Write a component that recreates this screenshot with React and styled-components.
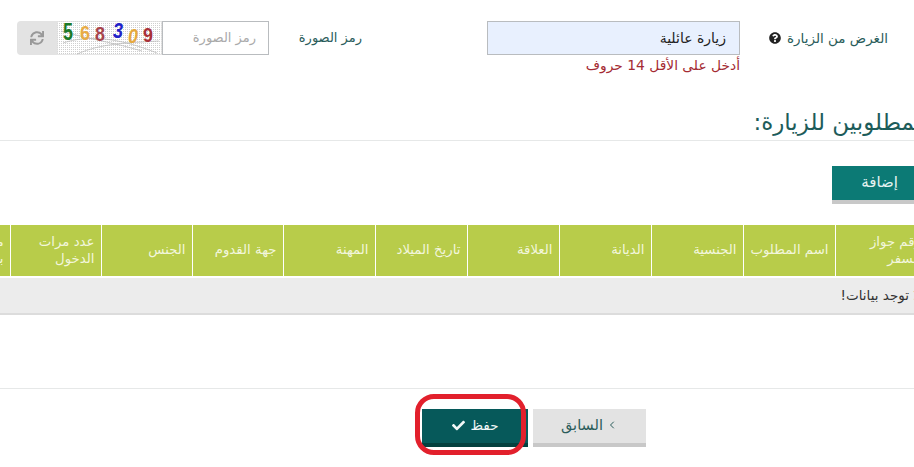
import React from "react";
import styled, { createGlobalStyle } from "styled-components";
import { FaSync, FaCheck, FaQuestionCircle } from "react-icons/fa";
import { ChevronLeft } from "lucide-react";

const GlobalStyle = createGlobalStyle`
  html, body {
    margin: 0;
    padding: 0;
    background: #fff;
  }
  * { box-sizing: border-box; }
`;

const Page = styled.div`
  position: relative;
  width: 914px;
  height: 467px;
  overflow: hidden;
  direction: rtl;
  font-family: "DejaVu Sans", "Noto Sans", sans-serif;
  font-size: 13px;
  color: #2a5c5a;
`;

const FormRow = styled.div`
  display: flex;
  height: 107px;
  padding-top: 21px;
`;

const Label = styled.label`
  flex: 0 0 ${(p) => p.$width}px;
  padding-right: ${(p) => p.$pad}px;
  font-size: ${(p) => p.$size || 13}px;
  line-height: 34px;
  white-space: nowrap;
  svg {
    font-size: 12px;
    color: #222;
    margin-right: 6px;
    vertical-align: -1px;
  }
`;

const Field = styled.div`
  flex: 0 0 253px;
`;

const TextInput = styled.div`
  height: 34px;
  background: ${(p) => (p.$filled ? "#e8f0fe" : "#fff")};
  border: 1px solid #b9bcbf;
  padding-right: ${(p) => (p.$filled ? 13 : 12)}px;
  font-size: ${(p) => (p.$filled ? 14 : 13)}px;
  line-height: 32px;
  color: ${(p) => (p.$filled ? "#222" : "#aaa")};
  width: ${(p) => (p.$width ? `${p.$width}px` : "auto")};
  flex: none;
`;

const ErrorText = styled.div`
  color: #a42a32;
  font-size: 13.8px;
  line-height: 17px;
  margin-top: 2px;
`;

const Captcha = styled.div`
  display: flex;
  align-items: stretch;
`;

const CaptchaImage = styled.svg`
  display: block;
  width: 105px;
  height: 34px;
`;

const RefreshButton = styled.div`
  width: 40px;
  height: 34px;
  background: #e3e3e3;
  border-radius: 4px 0 0 4px;
  display: flex;
  align-items: center;
  justify-content: center;
  color: #999;
  font-size: 14px;
`;

const SectionTitle = styled.h2`
  margin: 0 -110px 0 0;
  height: 33px;
  font-size: 23px;
  font-weight: 400;
  line-height: 30px;
  color: #1d5c5a;
  white-space: nowrap;
`;

const Divider = styled.div`
  height: 1px;
  background: #e6e8e8;
`;

const Toolbar = styled.div`
  display: flex;
  padding-top: 25px;
  margin-right: -20px;
`;

const AddButton = styled.div`
  width: 102px;
  height: 38px;
  background: #0c7a75;
  border-bottom: 4px solid #c8c8c8;
  color: #e6f3f2;
  font-size: 15px;
  padding-right: 36px;
  line-height: 33px;
`;

const TableWrap = styled.div`
  margin: 21px -13px 0 0;
  width: 1008px;
`;

const Table = styled.table`
  width: 1008px;
  table-layout: fixed;
  border-collapse: collapse;
  border-spacing: 0;
`;

const HeadCell = styled.th`
  width: ${(p) => p.$width}px;
  height: 52px;
  background: #b8cc4a;
  color: #f2f6dc;
  font-weight: 400;
  font-size: 13.3px;
  line-height: 17px;
  text-align: right;
  padding: 0 6px 2px;
  border-left: 1px solid #fff;
  border-bottom: 2px solid #fff;
  vertical-align: middle;
`;

const EmptyCell = styled.td`
  height: 37px;
  background: #ececec;
  border-bottom: 2px solid #dcdcdc;
  padding: 0 6px;
  color: #333;
  font-size: 13.5px;
  line-height: 33px;
`;

const Footer = styled.div`
  display: flex;
  gap: 5px;
  margin-top: 73px;
  border-top: 1px solid #e6e8e8;
  padding: 20px 268px 0 0;
`;

const ActionButton = styled.div`
  height: 38px;
  width: ${(p) => p.$width}px;
  display: flex;
  align-items: center;
  justify-content: center;
  gap: ${(p) => (p.$primary ? 6 : 3)}px;
  padding-bottom: 2px;
  background: ${(p) => (p.$primary ? "#06595a" : "#e3e3e3")};
  border-bottom: 4px solid ${(p) => (p.$primary ? "#03413f" : "#c8c8c8")};
  color: ${(p) => (p.$primary ? "#f2f7f7" : "#2a5c5a")};
  font-size: ${(p) => (p.$primary ? 13.5 : 14.5)}px;
`;

const Annotation = styled.div`
  position: absolute;
  left: 415px;
  top: 394px;
  width: 111px;
  height: 61px;
  border: 5px solid #e2202c;
  border-radius: 19px;
  pointer-events: none;
`;

const columns = [
  { name: "رقم جواز السفر", width: 92 },
  { name: "اسم المطلوب", width: 92 },
  { name: "الجنسية", width: 92 },
  { name: "الديانة", width: 92 },
  { name: "العلاقة", width: 92 },
  { name: "تاريخ الميلاد", width: 92 },
  { name: "المهنة", width: 92 },
  { name: "جهة القدوم", width: 91 },
  { name: "الجنس", width: 91 },
  { name: "عدد مرات الدخول", width: 91 },
  { name: "مدة الإقامة بالأيام", width: 91 },
];

const digits = [
  { ch: "5", x: 6, y: 19, size: 23, fill: "#1c7a28" },
  { ch: "6", x: 23, y: 19, size: 21, fill: "#e8ab45" },
  { ch: "8", x: 38, y: 20, size: 20, fill: "#a8444c" },
  { ch: "3", x: 56, y: 17, size: 22, fill: "#2222c8", italic: true },
  { ch: "0", x: 71, y: 22, size: 21, fill: "#e6a93e", italic: true },
  { ch: "9", x: 86, y: 21, size: 20, fill: "#a83038" },
];

const CaptchaArt = () => (
  <CaptchaImage viewBox="0 0 105 34">
    <defs>
      <pattern id="dots" width="2" height="2" patternUnits="userSpaceOnUse">
        <rect width="2" height="2" fill="#fff" />
        <rect width="1" height="1" fill="#cfcfcf" />
      </pattern>
    </defs>
    <rect x="0.5" y="0.5" width="104" height="33" fill="url(#dots)" stroke="#ccc" strokeDasharray="1 1" />
    <g stroke="#b5b5b5" strokeWidth="0.7" fill="none">
      <path d="M6 22 C30 14 60 16 100 32" />
      <path d="M20 33 C45 22 70 22 102 20" />
      <path d="M4 10 C30 18 60 22 85 30" />
    </g>
    <g fontFamily="Liberation Sans, sans-serif" fontWeight="700" direction="ltr">
      {digits.map((d) => (
        <text
          key={d.ch}
          x={d.x}
          y={d.y}
          fill={d.fill}
          fontSize={d.size}
          fontStyle={d.italic ? "italic" : "normal"}
          textLength="10"
          lengthAdjust="spacingAndGlyphs"
        >
          {d.ch}
        </text>
      ))}
    </g>
  </CaptchaImage>
);

export default function App() {
  return (
    <Page>
      <GlobalStyle />
      <FormRow>
        <Label $width={174} $pad={26} $size={13.5}>
          الغرض من الزيارة
          <FaQuestionCircle />
        </Label>
        <Field>
          <TextInput $filled>زيارة عائلية</TextInput>
          <ErrorText>أدخل على الأقل 14 حروف</ErrorText>
        </Field>
        <Label $width={218} $pad={125}>رمز الصورة</Label>
        <Captcha>
          <TextInput $width={107}>رمز الصورة</TextInput>
          <CaptchaArt />
          <RefreshButton>
            <FaSync />
          </RefreshButton>
        </Captcha>
      </FormRow>
      <SectionTitle>الأشخاص المطلوبين للزيارة:</SectionTitle>
      <Divider />
      <Toolbar>
        <AddButton>إضافة</AddButton>
      </Toolbar>
      <TableWrap>
        <Table>
          <thead>
            <tr>
              {columns.map((col) => (
                <HeadCell key={col.name} $width={col.width}>{col.name}</HeadCell>
              ))}
            </tr>
          </thead>
          <tbody>
            <tr>
              <EmptyCell colSpan={columns.length}>لا توجد بيانات!</EmptyCell>
            </tr>
          </tbody>
        </Table>
      </TableWrap>
      <Footer>
        <ActionButton $width={113}>
          <ChevronLeft size={12} />
          السابق
        </ActionButton>
        <ActionButton $primary $width={106}>
          حفظ
          <FaCheck size={13} />
        </ActionButton>
      </Footer>
      <Annotation />
    </Page>
  );
}
